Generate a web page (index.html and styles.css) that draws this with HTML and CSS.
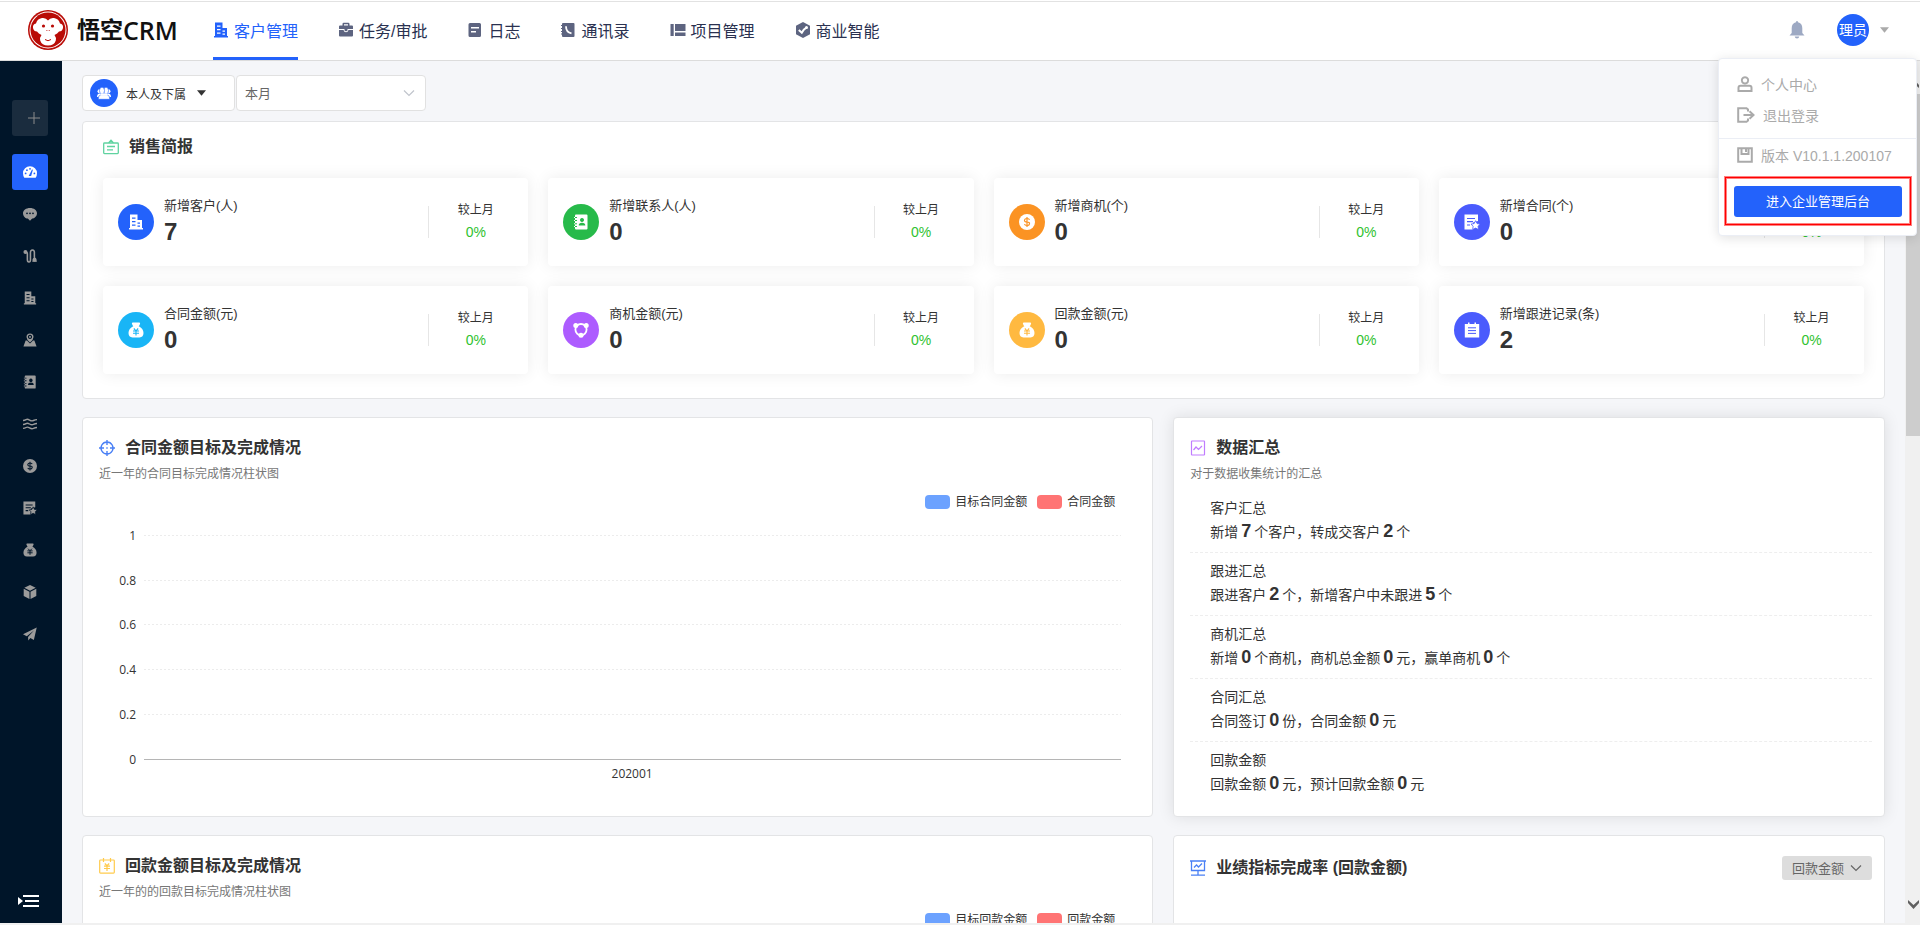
FILE: index.html
```html
<!DOCTYPE html>
<html lang="zh-CN">
<head>
    <meta charset="UTF-8">
    <meta name="viewport" content="width=device-width, initial-scale=1.0">
    <title>悟空CRM</title>
    <link rel="stylesheet" href="styles.css">
</head>
<body>
    <!-- icon sprite -->
    <svg class="sprite" aria-hidden="true">
        <symbol id="i-building" viewBox="0 0 16 16">
            <path fill-rule="evenodd" d="M2 .5h7.500V6H14v8h1v1.500H1V14h1zM4 3.500v1.200h3.500V3.500zM4 7v1.200h3.500V7zM4 10.500v1.200h3.500v-1.200zM9.500 8.500v1.200H12V8.500zM9.500 11.500v1.200H12v-1.200z"/>
        </symbol>
        <symbol id="i-case" viewBox="0 0 16 16">
            <path fill-rule="evenodd" d="M4.500 3.500V2q0-1.200 1.200-1.200h4.600q1.200 0 1.200 1.200v1.500H14q1 0 1 1V7H1V4.500q0-1 1-1zM6 3.500h4V2.200H6z"/>
            <path d="M1 8h4.500q.5 2.200 2.500 2.200T10.500 8H15v5.500q0 1-1 1H2q-1 0-1-1z"/>
            <path d="M6.500 7h3v1.200q0 1-1.500 1t-1.500-1z"/>
        </symbol>
        <symbol id="i-log" viewBox="0 0 16 16">
            <path fill-rule="evenodd" d="M3 1h9.500q1.500 0 1.500 1.500v11q0 1.500-1.500 1.500H3q-1.500 0-1.500-1.500v-11Q1.500 1 3 1zM4 5v1.500h8V5zM4 9v1.500h5V9z"/>
        </symbol>
        <symbol id="i-phone" viewBox="0 0 16 16">
            <path d="M3 1h10.500q1 0 1 1v12q0 1-1 1H3q-1 0-1-1v-1.500H1v-1h1v-1.500H1V9h1V7H1V6h1V4H1V3h1V2q0-1 1-1z"/>
            <path class="hole" d="M6 4.200q0 6 5.500 7.200" stroke-width="1.800"/>
        </symbol>
        <symbol id="i-project" viewBox="0 0 16 16">
            <path d="M.5 2h3.200v12H.5zM5 2h10.500v7H5zM5 10.500h10.500V14H5z"/>
        </symbol>
        <symbol id="i-bi" viewBox="0 0 16 16">
            <path d="M8 0l7 3.800v8.400L8 16l-7-3.800V3.800z"/>
            <path class="hole" d="M3.800 8l3 2.800 2-3.200 3-2.400" stroke-width="2"/>
            <circle cx="11.500" cy="5.500" r="1.500" fill="var(--hole)"/>
        </symbol>
        <symbol id="i-bell" viewBox="0 0 16 18">
            <path d="M8 0q1 0 1 1.200 4.300 1 4.300 6V12l2.200 2.500H.5L2.700 12V7.200q0-5 4.300-6Q7 0 8 0zM5.700 15.500h4.600Q10 17.500 8 17.500t-2.300-2z"/>
        </symbol>
        <symbol id="i-team" viewBox="0 0 16 16">
            <circle cx="2.800" cy="6" r="2.200"/><circle cx="13.200" cy="6" r="2.200"/>
            <path d="M0 12.500q0-4 3-4h10q3 0 3 4z"/>
            <g stroke="var(--hole)" stroke-width=".7">
                <path d="M1.500 15.200q-.5-4.500 3-5.200h7q3.500.7 3 5.200z"/>
                <ellipse cx="10.300" cy="5.300" rx="2.900" ry="4"/>
                <ellipse cx="5.700" cy="5.300" rx="2.900" ry="4"/>
            </g>
            <path d="M4 8.500h8V11H4z"/>
        </symbol>
        <symbol id="i-gauge" viewBox="0 0 16 16">
            <path d="M8 1.500A8 8 0 0 1 16 9.500q0 2.700-1.500 5h-13Q0 12.200 0 9.500a8 8 0 0 1 8-8z"/>
            <g fill="var(--hole)"><circle cx="3" cy="9.700" r="1"/><circle cx="4.500" cy="5.900" r="1"/><circle cx="8" cy="4.300" r="1"/><circle cx="13" cy="9.700" r="1"/><path d="M6.500 12.500l3.800-7.500 1 .4-2 7.100z"/></g>
        </symbol>
        <symbol id="i-chat" viewBox="0 0 16 16">
            <path d="M8 1c4.500 0 8 2.500 8 6s-3.200 6.200-5.500 6.200L8 15.700l-2.500-2.500C2.800 13 0 10.500 0 7s3.500-6 8-6z"/>
            <g fill="var(--hole)"><circle cx="4.600" cy="7.200" r="1"/><circle cx="8" cy="7.200" r="1"/><circle cx="11.400" cy="7.200" r="1"/></g>
        </symbol>
        <symbol id="i-route" viewBox="0 0 16 16">
            <circle cx="2.800" cy="3.500" r="2.300"/>
            <path d="M13.200 8l2.800 6.500h-5.600z"/>
            <circle cx="13.200" cy="12.300" r="2.300"/>
            <path d="M3 3.500q2 0 2 2V12q0 2.800 1.800 2.800T8.500 12V4q0-2.800 2.300-2.800T13 4v6" fill="none" stroke="currentColor" stroke-width="1.800"/>
        </symbol>
        <symbol id="i-map" viewBox="0 0 16 16">
            <path fill-rule="evenodd" d="M8 .5a4 4 0 0 1 4 4Q12 7.500 8 10.800 4 7.500 4 4.500a4 4 0 0 1 4-4zM8 2a2.400 2.400 0 1 0 .01 0zM8 3.500a1 1 0 1 1-.01 0z"/>
            <path d="M3 8.500h1.500L8 12l3.500-3.500H13l2.500 7H.5z"/>
        </symbol>
        <symbol id="i-contact" viewBox="0 0 16 16">
            <path fill-rule="evenodd" d="M3 .5h10.500q1 0 1 1v13q0 1-1 1H3q-1 0-1-1V13H1v-1h1v-1.700H1v-1h1V7H1V6h1V4H1V3h1V1.500q0-1 1-1zM9 4a2 2 0 1 0 .01 0zM5.700 11.500h6.600Q12.300 8.700 9 8.700t-3.300 2.800zM2 3v1h2V3zM2 6v1h2V6zM2 9.300v1h2v-1zM2 12v1h2v-1z"/>
        </symbol>
        <symbol id="i-waves" viewBox="0 0 16 16">
            <path d="M0 4q2 0 3.500-1t4 .5T12 4t4-1M0 8.500q2 0 3.500-1t4 .5 4.500.5 4-1M0 13q2 0 3.500-1t4 .5 4.500.5 4-1" fill="none" stroke="currentColor" stroke-width="1.600"/>
        </symbol>
        <symbol id="i-dollar" viewBox="0 0 16 16">
            <circle cx="8" cy="8" r="8"/>
            <path class="hole" d="M10.500 5.800Q10.200 4.500 8 4.500T5.500 6.200 8 8t2.500 1.800T8 11.500t-2.500-1.300M8 3v10" stroke-width="1.200"/>
        </symbol>
        <symbol id="i-contract" viewBox="0 0 16 16">
            <path d="M.5.500H14V7L9 8.500v7H.5z"/>
            <path class="hole" d="M3 4.500h8M3 7.700h6M3 11h3" stroke-width="1.200"/>
            <path d="M11.600 6.700l1.500 2.900 3 .5-2 2.200.4 3.200-2.900-1.400-2.900 1.400.4-3.200-2-2.200 3-.5z" stroke="var(--hole)" stroke-width=".8"/>
        </symbol>
        <symbol id="i-bag" viewBox="0 0 16 16">
            <path d="M4.500.5h7q1 .5.500 1.500L11 4h-.5Q15.500 6.500 15.500 11q0 4-4 4.500h-7q-4-.5-4-4.500Q.5 6.500 5.500 4H5L4 2q-.5-1 .5-1.500z"/>
            <path class="hole" d="M5.800 6.500L8 8.800l2.200-2.300M5 9h6M5 11.200h6M8 9v4.500" stroke-width="1.100"/>
        </symbol>
        <symbol id="i-cube" viewBox="0 0 16 16">
            <path d="M8 0l6.500 3L8 6.500 1.500 3zM.8 4.200L7.400 7.800V16L.8 12.500zM15.200 4.200L8.600 7.800V16l6.600-3.500z"/>
        </symbol>
        <symbol id="i-plane" viewBox="0 0 16 16">
            <path d="M15.700.5L0 8.300l4.300 2.200L12.500 4l-6.700 7.300L6 15.500l2.400-3 4 2.300z"/>
        </symbol>
        <symbol id="i-share" viewBox="0 0 16 16">
            <circle cx="2.800" cy="3.500" r="2.500"/><circle cx="13.200" cy="3.500" r="2.500"/><circle cx="8" cy="13.200" r="2.500"/>
            <circle cx="8" cy="7.600" r="5.600" fill="none" stroke="currentColor" stroke-width="1.800"/>
        </symbol>
        <symbol id="i-note" viewBox="0 0 16 16">
            <path d="M.8 2H4V.5h1.500V2h5V.5H12V2h3.200v13.500H.8z"/>
            <path class="hole" d="M4 5.800h8M4 8.600h8M4 11.400h8" stroke-width="1"/>
        </symbol>
        <symbol id="i-report" viewBox="0 0 16 16">
            <path d="M1.500 4h13q.8 0 .8.800v9q0 .8-.8.800h-13q-.8 0-.8-.8v-9q0-.8.800-.8zM4 7.500h8M4 10.800h6M5.500 4L8 1.200 10.500 4" fill="none" stroke="currentColor" stroke-width="1.300"/>
        </symbol>
        <symbol id="i-target" viewBox="0 0 16 16">
            <path d="M8 2a6 6 0 1 0 .01 0zM8 0v5M8 11v5M0 8h5M11 8h5M7.300 8h1.400" fill="none" stroke="currentColor" stroke-width="1.400"/>
        </symbol>
        <symbol id="i-trend" viewBox="0 0 16 16">
            <path d="M2 1h12q.5 0 .5.500v13q0 .5-.5.500H2q-.5 0-.5-.5v-13Q1.500 1 2 1zM3.500 10L6 7l2.500 2.500L12 6" fill="none" stroke="currentColor" stroke-width="1.200"/>
        </symbol>
        <symbol id="i-plan" viewBox="0 0 16 16">
            <path d="M1.500 2h13q.8 0 .8.800v11.500q0 .8-.8.800h-13q-.8 0-.8-.8V2.800q0-.8.800-.8zM4.500 0v4M11.500 0v4M5.800 5.500L8 7.700l2.200-2.200M5 8.200h6M5 10.500h6M8 8v5" fill="none" stroke="currentColor" stroke-width="1.200"/>
        </symbol>
        <symbol id="i-board" viewBox="0 0 16 16">
            <path d="M0 1h16M1.500 1v9.500h13V1M8 10.500V15M1 15.200h14M4 7.500L6.500 5l2 2L12 3.500" fill="none" stroke="currentColor" stroke-width="1.300"/>
        </symbol>
        <symbol id="i-user" viewBox="0 0 16 16">
            <path d="M8 1.200a3.200 3.200 0 1 0 .01 0zM3.500 9.800h9q2 0 2 2V15h-13v-3.200q0-2 2-2z" fill="none" stroke="currentColor" stroke-width="2"/>
        </symbol>
        <symbol id="i-exit" viewBox="0 0 18 16">
            <path d="M11 4.500V2.500L9.500 1.200H1.200v13.600h8.300l1.500-1.300v-2M6.500 8H16M12.500 4.300L16.500 8l-4 3.700" fill="none" stroke="currentColor" stroke-width="2"/>
        </symbol>
        <symbol id="i-save" viewBox="0 0 16 16">
            <path d="M1.200 1.200h13.600v13.600H1.200zM4.500 1.200V7h7V1.200M9 2v3" fill="none" stroke="currentColor" stroke-width="2"/>
        </symbol>
        <symbol id="i-down" viewBox="0 0 12 12">
            <path d="M1 3.500l5 5 5-5" fill="none" stroke="currentColor" stroke-width="1.200"/>
        </symbol>
        <symbol id="i-caret" viewBox="0 0 10 6"><path d="M0 0h10L5 6z"/></symbol>
    </svg>

    <header class="header">
        <a class="logo" href="#">
            <svg class="logo-mark" viewBox="0 0 40 40" aria-hidden="true">
                <circle cx="20" cy="20" r="20" fill="#b90b06"/>
                <circle cx="20" cy="20" r="18.500" fill="#fff"/>
                <circle cx="20" cy="20" r="17.500" fill="#b90b06"/>
                <path d="M20 10.500Q22 7.500 26 8q5 .8 6 5.500 3.500.5 3 4.500-.8 3.500-4 3.500-1.500 2-4.500 3.500 2 2.500 1.300 5.500-1.500 5-7.800 5t-7.800-5q-.7-3 1.300-5.500-3-1.500-4.500-3.500-3.200 0-4-3.500-.5-4 3-4.500 1-4.700 6-5.500 4-.5 6 2.500z" fill="#fff"/>
                <circle cx="15.500" cy="16" r="1.600" fill="#b90b06"/>
                <circle cx="24.500" cy="16" r="1.600" fill="#b90b06"/>
                <path d="M18.500 20.500h.8M20.800 20.500h.8M17 29.500q3 2.500 6 0" fill="none" stroke="#b90b06"/>
            </svg>
            <span class="logo-text">悟空<span>CRM</span></span>
        </a>
        <nav class="nav">
            <a class="nav-item active" href="#"><svg class="icon"><use href="#i-building"/></svg>客户管理</a>
            <a class="nav-item" href="#"><svg class="icon"><use href="#i-case"/></svg>任务/审批</a>
            <a class="nav-item" href="#"><svg class="icon"><use href="#i-log"/></svg>日志</a>
            <a class="nav-item" href="#"><svg class="icon"><use href="#i-phone"/></svg>通讯录</a>
            <a class="nav-item" href="#"><svg class="icon"><use href="#i-project"/></svg>项目管理</a>
            <a class="nav-item" href="#"><svg class="icon"><use href="#i-bi"/></svg>商业智能</a>
        </nav>
        <div class="account">
            <button class="bell" aria-label="消息"><svg><use href="#i-bell"/></svg></button>
            <button class="avatar-btn" aria-label="账户">
                <span class="avatar">理员</span>
                <svg class="caret"><use href="#i-caret"/></svg>
            </button>
        </div>

        <div class="user-menu">
            <a class="menu-item" href="#"><svg class="icon"><use href="#i-user"/></svg>个人中心</a>
            <a class="menu-item" href="#"><svg class="icon icon-exit"><use href="#i-exit"/></svg>退出登录</a>
            <div class="menu-version"><svg class="icon"><use href="#i-save"/></svg>版本 V10.1.1.200107</div>
            <div class="highlight"><button class="admin-btn">进入企业管理后台</button></div>
        </div>
    </header>

    <div class="layout">
        <aside class="sidebar">
            <button class="add-btn" aria-label="新建"><svg viewBox="0 0 12 12"><path d="M6 0v12M0 6h12" stroke="currentColor"/></svg></button>
            <a class="side-item active" href="#" aria-label="仪表盘"><svg><use href="#i-gauge"/></svg></a>
            <a class="side-item" href="#" aria-label="消息"><svg><use href="#i-chat"/></svg></a>
            <a class="side-item" href="#" aria-label="线索"><svg><use href="#i-route"/></svg></a>
            <a class="side-item" href="#" aria-label="客户"><svg><use href="#i-building"/></svg></a>
            <a class="side-item" href="#" aria-label="附近"><svg><use href="#i-map"/></svg></a>
            <a class="side-item" href="#" aria-label="联系人"><svg><use href="#i-contact"/></svg></a>
            <a class="side-item" href="#" aria-label="公海"><svg><use href="#i-waves"/></svg></a>
            <a class="side-item" href="#" aria-label="商机"><svg><use href="#i-dollar"/></svg></a>
            <a class="side-item" href="#" aria-label="合同"><svg><use href="#i-contract"/></svg></a>
            <a class="side-item" href="#" aria-label="回款"><svg><use href="#i-bag"/></svg></a>
            <a class="side-item" href="#" aria-label="产品"><svg><use href="#i-cube"/></svg></a>
            <a class="side-item" href="#" aria-label="营销"><svg><use href="#i-plane"/></svg></a>
            <button class="collapse-btn" aria-label="展开菜单">
                <svg viewBox="0 0 21 12"><path d="M0 2l5 4-5 4zM5 0h16v2H5zM7 5h14v2H7zM5 10h16v2H5z"/></svg>
            </button>
        </aside>

        <main class="main">
            <div class="filters">
                <button class="scope">
                    <span class="scope-icon"><svg><use href="#i-team"/></svg></span>
                    本人及下属
                    <svg class="caret"><use href="#i-caret"/></svg>
                </button>
                <div class="select period">
                    <select aria-label="时间"><option>本月</option></select>
                    <svg><use href="#i-down"/></svg>
                </div>
            </div>

            <section class="panel brief">
                <h2 class="brief-title"><svg class="icon green"><use href="#i-report"/></svg>销售简报</h2>
                <div class="cards">
                    <div class="card">
                        <span class="badge b-blue"><svg><use href="#i-building"/></svg></span>
                        <div class="info"><p>新增客户(人)</p><strong>7</strong></div>
                        <div class="compare"><p>较上月</p><span>0%</span></div>
                    </div>
                    <div class="card">
                        <span class="badge b-green"><svg><use href="#i-contact"/></svg></span>
                        <div class="info"><p>新增联系人(人)</p><strong>0</strong></div>
                        <div class="compare"><p>较上月</p><span>0%</span></div>
                    </div>
                    <div class="card">
                        <span class="badge b-orange"><svg><use href="#i-dollar"/></svg></span>
                        <div class="info"><p>新增商机(个)</p><strong>0</strong></div>
                        <div class="compare"><p>较上月</p><span>0%</span></div>
                    </div>
                    <div class="card">
                        <span class="badge b-indigo"><svg><use href="#i-contract"/></svg></span>
                        <div class="info"><p>新增合同(个)</p><strong>0</strong></div>
                        <div class="compare"><p>较上月</p><span>0%</span></div>
                    </div>
                    <div class="card">
                        <span class="badge b-cyan"><svg><use href="#i-bag"/></svg></span>
                        <div class="info"><p>合同金额(元)</p><strong>0</strong></div>
                        <div class="compare"><p>较上月</p><span>0%</span></div>
                    </div>
                    <div class="card">
                        <span class="badge b-purple"><svg><use href="#i-share"/></svg></span>
                        <div class="info"><p>商机金额(元)</p><strong>0</strong></div>
                        <div class="compare"><p>较上月</p><span>0%</span></div>
                    </div>
                    <div class="card">
                        <span class="badge b-yellow"><svg><use href="#i-bag"/></svg></span>
                        <div class="info"><p>回款金额(元)</p><strong>0</strong></div>
                        <div class="compare"><p>较上月</p><span>0%</span></div>
                    </div>
                    <div class="card">
                        <span class="badge b-indigo"><svg><use href="#i-note"/></svg></span>
                        <div class="info"><p>新增跟进记录(条)</p><strong>2</strong></div>
                        <div class="compare"><p>较上月</p><span>0%</span></div>
                    </div>
                </div>
            </section>

            <div class="row">
                <section class="panel block">
                    <h2><svg class="icon blue"><use href="#i-target"/></svg>合同金额目标及完成情况</h2>
                    <p class="sub">近一年的合同目标完成情况柱状图</p>
                    <div class="legend">
                        <span class="swatch goal"></span>目标合同金额
                        <span class="swatch done"></span>合同金额
                    </div>
                    <svg class="chart" role="img" aria-label="合同金额目标及完成情况">
                        <g class="grid">
                            <line x1="45" y1="23.500" x2="100%" y2="23.500"/>
                            <line x1="45" y1="68.500" x2="100%" y2="68.500"/>
                            <line x1="45" y1="112.500" x2="100%" y2="112.500"/>
                            <line x1="45" y1="157.500" x2="100%" y2="157.500"/>
                            <line x1="45" y1="202.500" x2="100%" y2="202.500"/>
                        </g>
                        <line class="axis" x1="45" y1="247.500" x2="100%" y2="247.500"/>
                        <g class="ticks">
                            <text x="37" y="28">1</text>
                            <text x="37" y="73">0.8</text>
                            <text x="37" y="117">0.6</text>
                            <text x="37" y="162">0.4</text>
                            <text x="37" y="207">0.2</text>
                            <text x="37" y="252">0</text>
                        </g>
                        <text class="month" x="50%" dx="22" y="266">202001</text>
                    </svg>
                </section>

                <section class="panel block raised">
                    <h2><svg class="icon violet"><use href="#i-trend"/></svg>数据汇总</h2>
                    <p class="sub">对于数据收集统计的汇总</p>
                    <ul class="summary">
                        <li><h3>客户汇总</h3><p>新增<b>7</b>个客户，转成交客户<b>2</b>个</p></li>
                        <li><h3>跟进汇总</h3><p>跟进客户<b>2</b>个，新增客户中未跟进<b>5</b>个</p></li>
                        <li><h3>商机汇总</h3><p>新增<b>0</b>个商机，商机总金额<b>0</b>元，赢单商机<b>0</b>个</p></li>
                        <li><h3>合同汇总</h3><p>合同签订<b>0</b>份，合同金额<b>0</b>元</p></li>
                        <li><h3>回款金额</h3><p>回款金额<b>0</b>元，预计回款金额<b>0</b>元</p></li>
                    </ul>
                </section>
            </div>

            <div class="row">
                <section class="panel block">
                    <h2><svg class="icon yellow"><use href="#i-plan"/></svg>回款金额目标及完成情况</h2>
                    <p class="sub">近一年的的回款目标完成情况柱状图</p>
                    <div class="legend">
                        <span class="swatch goal"></span>目标回款金额
                        <span class="swatch done"></span>回款金额
                    </div>
                </section>
                <section class="panel block">
                    <div class="block-head">
                        <h2><svg class="icon blue"><use href="#i-board"/></svg>业绩指标完成率 (回款金额)</h2>
                        <div class="select metric">
                            <select aria-label="指标"><option>回款金额</option></select>
                            <svg><use href="#i-down"/></svg>
                        </div>
                    </div>
                </section>
            </div>
        </main>

        <div class="scrollbar" aria-hidden="true">
            <svg viewBox="0 0 11 9"><path d="M0 9V6l5.500-6L11 6v3L5.500 4z"/></svg>
            <div class="thumb"></div>
            <svg viewBox="0 0 11 9"><path d="M0 0v3l5.500 6L11 3V0L5.500 5z"/></svg>
        </div>
    </div>
</body>
</html>
```

FILE: styles.css
```css
* {
    box-sizing: border-box;
}

body {
    --hole: #fff;
    display: flex;
    flex-direction: column;
    height: 100vh;
    margin: 0;
    padding-top: 1px;
    border-bottom: 2px solid #f0f0f0;
    overflow: hidden;
    font-family: "Liberation Sans", "Noto Sans CJK SC", sans-serif;
    font-size: 14px;
    color: #333;
    background: #fff;
}

h2, h3, p, ul {
    margin: 0;
    padding: 0;
}

a {
    color: inherit;
    text-decoration: none;
}

button, select {
    padding: 0;
    border: 0;
    background: none;
    color: inherit;
    font: inherit;
    cursor: pointer;
}

svg {
    flex: none;
    fill: currentColor;
}

.sprite {
    position: absolute;
    width: 0;
    height: 0;
}

.hole {
    fill: none;
    stroke: var(--hole);
}

.icon {
    width: 16px;
    height: 16px;
}

.green { color: #5fd3a0; }
.blue { color: #4a80f5; }
.violet { color: #c07cff; }
.yellow { color: #ffcb4d; }

/* header */
.header {
    position: relative;
    z-index: 2;
    flex: none;
    display: flex;
    align-items: center;
    height: 60px;
    padding: 0 31px 0 28px;
    border-top: 1px solid #e2e2e2;
    border-bottom: 1px solid #dcdcdc;
    background: #fff;
}

.logo {
    display: flex;
    align-items: center;
    gap: 9px;
    width: 185px;
    padding-bottom: 2px;
    color: #111;
}

.logo-mark {
    width: 40px;
    height: 40px;
}

.logo-text {
    display: flex;
    align-items: center;
    line-height: 30px;
    font-size: 23px;
    font-weight: 700;
}

.logo-text span {
    font-family: "Open Sans", sans-serif;
    font-size: 25px;
    font-weight: 600;
}

.nav {
    display: flex;
    gap: 40px;
    height: 58px;
    font-size: 16px;
}

.nav-item {
    display: flex;
    align-items: center;
    gap: 5px;
    border-bottom: 3px solid transparent;
    color: #2a3150;
}

.nav-item .icon {
    color: #5d6480;
}

.nav-item.active,
.nav-item.active .icon {
    color: #2362fb;
}

.nav-item.active {
    border-bottom-color: #2362fb;
}

.account {
    display: flex;
    align-items: center;
    gap: 32px;
    margin-left: auto;
    padding-bottom: 2px;
}

.bell {
    color: #9da9c3;
}

.bell svg {
    display: block;
    width: 16px;
    height: 18px;
}

.avatar-btn {
    display: flex;
    align-items: center;
    gap: 11px;
    color: #aaa;
}

.caret {
    width: 9px;
    height: 6px;
}

.avatar {
    width: 32px;
    border-radius: 50%;
    background: #2362fb;
    color: #fff;
    line-height: 32px;
    text-align: center;
}

/* account menu, drops over the page */
.user-menu {
    position: absolute;
    top: 56px;
    right: 3px;
    width: 199px;
    height: 178px;
    padding-top: 9px;
    border: 1px solid #ebeef5;
    border-radius: 4px;
    background: #fff;
    box-shadow: 0 2px 12px rgba(0, 0, 0, 0.12);
    color: #aaa;
}

.menu-item,
.menu-version {
    display: flex;
    align-items: center;
    gap: 8px;
    height: 31px;
    padding-left: 18px;
}

.icon-exit {
    width: 18px;
}

.menu-version {
    height: 33px;
    margin-top: 8px;
    border-top: 1px solid #ebeef5;
}

.highlight {
    margin: 6px 5px 0 6px;
    padding: 8px 8px 7px;
    border: 1px solid #f00;
    box-shadow: 0 0 0 1px #ff8080, inset 0 0 0 1px #ff8080;
}

.admin-btn {
    display: block;
    width: 100%;
    border-radius: 3px;
    background: #2362fb;
    color: #fff;
    font-size: 13px;
    line-height: 31px;
}

/* sidebar */
.layout {
    flex: 1;
    display: flex;
    min-height: 0;
}

.sidebar {
    --hole: #001529;
    flex: none;
    display: flex;
    flex-direction: column;
    gap: 6px;
    width: 62px;
    padding: 39px 12px 16px;
    background: #001529;
    color: #9b9b9b;
}

.add-btn {
    width: 36px;
    height: 36px;
    margin-bottom: 12px;
    padding: 2px 0 0 8px;
    border-radius: 3px;
    background: #1a2c3e;
    color: #8b8b8b;
}

.add-btn svg {
    width: 12px;
    height: 12px;
}

.side-item {
    display: flex;
    align-items: center;
    justify-content: center;
    width: 36px;
    height: 36px;
    border-radius: 3px;
}

.side-item svg {
    width: 14px;
    height: 14px;
}

.side-item.active {
    --hole: #2362fb;
    background: #2362fb;
    color: #fff;
}

.collapse-btn {
    width: 21px;
    margin: auto 0 0 6px;
    color: #fff;
}

.collapse-btn svg {
    display: block;
    width: 21px;
    height: 12px;
}

/* content */
.main {
    flex: 1;
    min-width: 0;
    padding: 14px 20px 0;
    overflow: hidden;
    background: #f5f6f9;
}

.filters {
    display: flex;
    gap: 1px;
    height: 36px;
    margin-bottom: 10px;
}

.scope {
    display: flex;
    align-items: center;
    width: 153px;
    padding-left: 7px;
    border: 1px solid #e1e1e1;
    border-radius: 4px;
    background: #fff;
    font-size: 12px;
}

.scope-icon {
    --hole: #2362fb;
    display: flex;
    align-items: center;
    justify-content: center;
    width: 28px;
    height: 28px;
    margin-right: 8px;
    border-radius: 50%;
    background: #2362fb;
    color: #fff;
}

.scope-icon svg {
    width: 14px;
    height: 14px;
}

.scope .caret {
    margin-left: 11px;
}

.select {
    position: relative;
    color: #666;
    font-size: 13px;
}

.select select {
    width: 100%;
    height: 100%;
    appearance: none;
}

.select svg {
    position: absolute;
    top: 50%;
    right: 10px;
    width: 12px;
    height: 12px;
    margin-top: -6px;
    pointer-events: none;
}

.period {
    width: 190px;
    border: 1px solid #e1e1e1;
    border-radius: 4px;
    background: #fff;
}

.period select {
    padding-left: 8px;
}

.period svg {
    color: #c0c4cc;
}

.panel {
    border: 1px solid #e3e4e6;
    border-radius: 4px;
    background: #fff;
}

.panel h2 {
    display: flex;
    align-items: center;
    gap: 10px;
    font-size: 16px;
    line-height: 24px;
}

.brief {
    padding: 13px 20px 24px;
}

.panel .brief-title {
    margin-bottom: 19px;
}

.cards {
    display: grid;
    grid-template-columns: repeat(4, 1fr);
    gap: 20px;
}

.card {
    display: flex;
    align-items: center;
    height: 88px;
    padding-left: 15px;
    border-radius: 4px;
    background: #fff;
    box-shadow: 0 0 16px rgba(0, 0, 0, 0.08);
}

.badge {
    display: flex;
    align-items: center;
    justify-content: center;
    width: 36px;
    height: 36px;
    border-radius: 50%;
    background: var(--hole);
    color: #fff;
}

.badge svg {
    width: 16px;
    height: 16px;
}

.b-blue { --hole: #2362fb; }
.b-green { --hole: #27ba4a; }
.b-orange { --hole: #fb9323; }
.b-indigo { --hole: #4a5bfd; }
.b-cyan { --hole: #19b5f6; }
.b-purple { --hole: #ad5cff; }
.b-yellow { --hole: #ffb940; }

.info {
    flex: 1;
    margin-left: 10px;
    padding-bottom: 4px;
}

.info p {
    font-size: 13px;
    line-height: 24px;
}

.info strong {
    display: block;
    font-size: 24px;
    line-height: 28px;
}

.compare {
    display: flex;
    flex-direction: column;
    align-items: center;
    justify-content: center;
    width: 100px;
    height: 32px;
    padding: 0 6px 2px 0;
    border-left: 1px solid #e6e6e6;
    line-height: 22px;
}

.compare p {
    font-size: 12px;
}

.compare span {
    color: #2fc22f;
}

.row {
    display: grid;
    grid-template-columns: 1.505fr 1fr;
    gap: 20px;
    margin-top: 18px;
}

.block {
    padding: 18px 12px 11px 16px;
}

.raised {
    box-shadow: 0 0 16px rgba(0, 0, 0, 0.1);
}

.sub {
    margin-top: 4px;
    color: #777;
    font-size: 12px;
    line-height: 20px;
}

.legend {
    display: flex;
    align-items: center;
    justify-content: flex-end;
    margin: 8px 25px 0 0;
    font-size: 12px;
    line-height: 20px;
}

.swatch {
    width: 25px;
    height: 14px;
    margin: 0 5px 0 10px;
    border-radius: 4px;
}

.goal { background: #6ca2ff; }
.done { background: #ff7474; }

.chart {
    display: block;
    width: calc(100% - 19px);
    height: 290px;
    font-family: "Open Sans", sans-serif;
    font-size: 12px;
}

.grid {
    stroke: #ececec;
    stroke-dasharray: 2 2;
}

.axis {
    stroke: #b5b5b5;
}

.ticks {
    text-anchor: end;
}

.month {
    text-anchor: middle;
}

.summary {
    margin-top: 6px;
    list-style: none;
}

.summary li {
    height: 63px;
    padding: 6px 20px 0;
    border-bottom: 1px dashed #eee;
}

.summary li:last-child {
    border-bottom: 0;
}

.summary h3 {
    font-size: 14px;
    font-weight: 400;
    line-height: 24px;
}

.summary p {
    line-height: 24px;
}

.summary b {
    margin: 0 3px;
    font-size: 18px;
    line-height: 20px;
}

.block-head {
    display: flex;
    align-items: center;
    justify-content: space-between;
    height: 28px;
}

.metric {
    width: 90px;
    height: 24px;
    border-radius: 3px;
    background: #ddd;
}

.metric select {
    padding-left: 10px;
}

/* scrollbar */
.scrollbar {
    flex: none;
    display: flex;
    flex-direction: column;
    align-items: center;
    width: 15px;
    padding: 18px 0 14px 1px;
    background: #f0f0f0;
    color: #606060;
}

.scrollbar svg {
    width: 11px;
    height: 9px;
}

.thumb {
    width: 100%;
    height: 342px;
    margin: 6px 0 auto;
    background: #cdcdcd;
}
```
